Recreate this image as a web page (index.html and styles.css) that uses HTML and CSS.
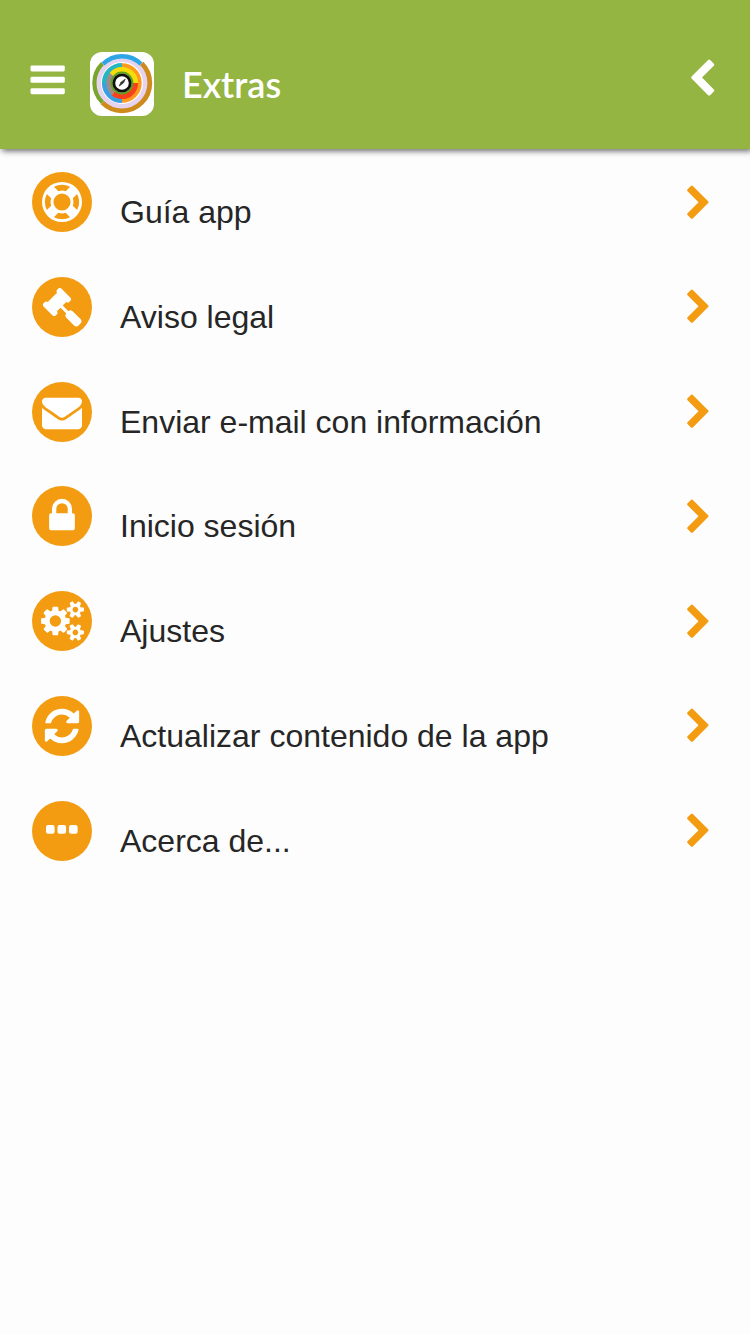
FILE: index.html
```html
<!DOCTYPE html>
<html lang="es">
<head>
    <meta charset="UTF-8">
    <meta name="viewport" content="width=device-width, initial-scale=1.0">
    <title>Extras</title>
    <link rel="stylesheet" href="styles.css">
</head>
<body>
    <header class="header">
        <button class="menu-btn" aria-label="Menú">
            <svg width="35" height="30" viewBox="0 0 35 30">
                <rect x="0.5" y="0.4" width="34.3" height="6" rx="1.4"/>
                <rect x="0.5" y="11.8" width="34.3" height="6" rx="1.4"/>
                <rect x="0.5" y="23.2" width="34.3" height="6" rx="1.4"/>
            </svg>
        </button>
        <svg class="logo" viewBox="0 0 64 64">
            <g class="rings" fill="none">
                <circle cx="32" cy="31" r="23.5" stroke="#e6d3ef" stroke-width="5"/>
                <circle cx="32" cy="31" r="27.8" pathLength="360" stroke="#cf8a1c" stroke-width="4.8" stroke-dasharray="180 180" stroke-dashoffset="45"/>
                <circle cx="32" cy="31" r="27.6" pathLength="360" stroke="#7aa52c" stroke-width="4.2" stroke-dasharray="90 270" stroke-dashoffset="-135"/>
                <circle cx="32" cy="31" r="26.8" pathLength="360" stroke="#2ea6e6" stroke-width="4.4" stroke-dasharray="90 270" stroke-dashoffset="-225"/>
                <circle cx="32" cy="31" r="17.6" pathLength="360" stroke="#3a9fe0" stroke-width="5" stroke-dasharray="90 270" stroke-dashoffset="-90"/>
                <circle cx="32" cy="31" r="17.6" pathLength="360" stroke="#27b5c0" stroke-width="5" stroke-dasharray="90 270" stroke-dashoffset="-180"/>
                <circle cx="32" cy="31" r="17.4" pathLength="360" stroke="#ff9a1c" stroke-width="4.6" stroke-dasharray="180 180" stroke-dashoffset="90"/>
                <circle cx="32" cy="31" r="13" pathLength="360" stroke="#a08a86" stroke-width="5" stroke-dasharray="90 270" stroke-dashoffset="-130"/>
                <circle cx="32" cy="31" r="13.3" pathLength="360" stroke="#f5dc0a" stroke-width="5.6" stroke-dasharray="140 220" stroke-dashoffset="140"/>
                <circle cx="32" cy="31" r="13.3" pathLength="360" stroke="#f8401c" stroke-width="5.6" stroke-dasharray="130 230"/>
                <circle cx="32" cy="31" r="10.4" stroke="#5fa51c" stroke-width="2"/>
                <circle cx="32" cy="31" r="8.2" fill="#fff" stroke="#111" stroke-width="2.8"/>
                <path d="M29.2 34l1.8-3.8 4.2-3-1.8 3.8z" fill="#333" stroke="#333" stroke-width="0.8"/>
            </g>
        </svg>
        <h1 class="title">Extras</h1>
        <button class="back-btn" aria-label="Volver">
            <svg width="40" height="40" viewBox="0 0 1792 1792"><path d="M1427 301l-531 531 531 531q19 19 19 45t-19 45l-166 166q-19 19-45 19t-45-19l-742-742q-19-19-19-45t19-45l742-742q19-19 45-19t45 19l166 166q19 19 19 45t-19 45z"/></svg>
        </button>
    </header>

    <svg class="defs">
        <symbol id="chevron" viewBox="0 0 1792 1792"><path d="M1363 877l-742 742q-19 19-45 19t-45-19l-166-166q-19-19-19-45t19-45l531-531-531-531q-19-19-19-45t19-45l166-166q19-19 45-19t45 19l742 742q19 19 19 45t-19 45z"/></symbol>
    </svg>

    <ul class="menu">
        <li class="menu-item">
            <span class="icon"><svg viewBox="0 0 1792 1792"><path d="M896 0q182 0 348 71t286 191 191 286 71 348-71 348-191 286-286 191-348 71-348-71-286-191-191-286-71-348 71-348 191-286 286-191 348-71zm0 128q-190 0-361 90l194 194q82-28 167-28t167 28l194-194q-171-90-361-90zm-678 1129l194-194q-28-82-28-167t28-167l-194-194q-90 171-90 361t90 361zm678 407q190 0 361-90l-194-194q-82 28-167 28t-167-28l-194 194q171 90 361 90zm0-384q159 0 271.5-112.5t112.5-271.5-112.5-271.5-271.5-112.5-271.5 112.5-112.5 271.5 112.5 271.5 271.5 112.5zm484-217l194 194q90-171 90-361t-90-361l-194 194q28 82 28 167t-28 167z"/></svg></span>
            <span class="label">Guía app</span>
            <svg class="chevron"><use href="#chevron"/></svg>
        </li>
        <li class="menu-item">
            <span class="icon"><svg viewBox="0 0 1792 1792"><path d="M1771 1536q0 53-37 90l-107 108q-39 37-91 37-53 0-90-37l-363-364q-38-36-38-90 0-53 43-96l-256-256-126 126q-14 14-34 14t-34-14q2 2 12.5 12t12.5 13 10 11.5 10 13.5 6 13.5 5.5 16.5 1.5 18q0 38-28 68-3 3-16.5 18t-19 20.5-18.5 16.5-22 15.5-22 9-26 4.5q-40 0-68-28l-408-408q-28-28-28-68 0-13 4.5-26t9-22 15.5-22 16.5-18.5 20.5-19 18-16.5q30-28 68-28 10 0 18 1.5t16.5 5.5 13.5 6 13.5 10 11.5 10 13 12.5 12 12.5q-14-14-14-34t14-34l348-348q14-14 34-14t34 14q-2-2-12.5-12t-12.5-13-10-11.5-10-13.5-6-13.5-5.5-16.5-1.5-18q0-38 28-68 3-3 16.5-18t19-20.5 18.5-16.5 22-15.5 22-9 26-4.5q40 0 68 28l408 408q28 28 28 68 0 13-4.5 26t-9 22-15.5 22-16.5 18.5-20.5 19-18 16.5q-30 28-68 28-10 0-18-1.5t-16.5-5.5-13.5-6-13.5-10-11.5-10-13-12.5-12-12.5q14 14 14 34t-14 34l-126 126 256 256q43-43 96-43 52 0 91 37l363 363q37 39 37 91z"/></svg></span>
            <span class="label">Aviso legal</span>
            <svg class="chevron"><use href="#chevron"/></svg>
        </li>
        <li class="menu-item">
            <span class="icon"><svg viewBox="0 0 1792 1792"><path d="M1792 710v794q0 66-47 113t-113 47h-1472q-66 0-113-47t-47-113v-794q44 49 101 87 362 246 497 345 57 42 92.5 65.5t94.5 48 110 24.5h2q51 0 110-24.5t94.5-48 92.5-65.5q170-123 498-345 57-39 100-87zm0-294q0 79-49 151t-122 123q-376 261-468 325-10 7-42.5 31t-54 38.5-52 32.5-57.5 27-50 9h-2q-23 0-50-9t-57.5-27-52-32.5-54-38.5-42.5-31q-91-64-262-182.5t-205-142.5q-62-42-117-115.5t-55-136.5q0-78 41.5-130t118.5-52h1472q65 0 112.5 47t47.5 113z"/></svg></span>
            <span class="label">Enviar e-mail con información</span>
            <svg class="chevron"><use href="#chevron"/></svg>
        </li>
        <li class="menu-item">
            <span class="icon"><svg viewBox="0 0 1792 1792"><path d="M640 768h512v-192q0-106-75-181t-181-75-181 75-75 181v192zm832 96v576q0 40-28 68t-68 28h-960q-40 0-68-28t-28-68v-576q0-40 28-68t68-28h32v-192q0-184 132-316t316-132 316 132 132 316v192h32q40 0 68 28t28 68z"/></svg></span>
            <span class="label">Inicio sesión</span>
            <svg class="chevron"><use href="#chevron"/></svg>
        </li>
        <li class="menu-item">
            <span class="icon"><svg class="wide" viewBox="0 0 1920 1792"><path d="M896 896q0-106-75-181t-181-75-181 75-75 181 75 181 181 75 181-75 75-181zm768 512q0-52-38-90t-90-38-90 38-38 90q0 53 37.5 90.5t90.5 37.5 90.5-37.5 37.5-90.5zm0-1024q0-52-38-90t-90-38-90 38-38 90q0 53 37.5 90.5t90.5 37.5 90.5-37.5 37.5-90.5zm-384 421v185q0 10-7 19.5t-16 10.5l-155 24q-11 35-32 76 34 48 90 115 7 11 7 20 0 12-7 19-23 30-82.5 89.5t-78.5 59.5q-11 0-21-7l-115-90q-37 19-77 31-11 108-23 155-7 24-30 24h-186q-11 0-20-7.5t-10-17.5l-23-153q-34-10-75-31l-118 89q-7 7-20 7-11 0-21-8-144-133-144-160 0-9 7-19 10-14 41-53t47-61q-23-44-35-82l-152-24q-10-1-17-9.5t-7-19.5v-185q0-10 7-19.5t16-10.5l155-24q11-35 32-76-34-48-90-115-7-11-7-20 0-12 7-20 22-30 82-89t79-59q11 0 21 7l115 90q34-18 77-32 11-108 23-154 7-24 30-24h186q11 0 20 7.5t10 17.5l23 153q34 10 75 31l118-89q8-7 20-7 11 0 21 8 144 133 144 160 0 8-7 19-12 16-42 54t-45 60q23 48 34 82l152 23q10 2 17 10.5t7 19.5zm640 533v140q0 16-149 31-12 27-30 52 51 113 51 138 0 4-4 7-122 71-124 71-8 0-46-47t-52-68q-20 2-30 2t-30-2q-14 21-52 68t-46 47q-2 0-124-71-4-3-4-7 0-25 51-138-18-25-30-52-149-15-149-31v-140q0-16 149-31 13-29 30-52-51-113-51-138 0-4 4-7 4-2 35-20t59-34 30-16q8 0 46 46.5t52 67.5q20-2 30-2t30 2q51-71 92-112l6-2q4 0 124 70 4 3 4 7 0 25-51 138 17 23 30 52 149 15 149 31zm0-1024v140q0 16-149 31-12 27-30 52 51 113 51 138 0 4-4 7-122 71-124 71-8 0-46-47t-52-68q-20 2-30 2t-30-2q-14 21-52 68t-46 47q-2 0-124-71-4-3-4-7 0-25 51-138-18-25-30-52-149-15-149-31v-140q0-16 149-31 13-29 30-52-51-113-51-138 0-4 4-7 4-2 35-20t59-34 30-16q8 0 46 46.5t52 67.5q20-2 30-2t30 2q51-71 92-112l6-2q4 0 124 70 4 3 4 7 0 25-51 138 17 23 30 52 149 15 149 31z"/></svg></span>
            <span class="label">Ajustes</span>
            <svg class="chevron"><use href="#chevron"/></svg>
        </li>
        <li class="menu-item">
            <span class="icon"><svg viewBox="0 0 1792 1792"><path d="M1639 1056q0 5-1 7-64 268-268 434.5t-478 166.5q-146 0-282.5-55t-243.5-157l-129 129q-19 19-45 19t-45-19-19-45v-448q0-26 19-45t45-19h448q26 0 45 19t19 45-19 45l-137 137q71 66 161 102t187 36q134 0 250-65t186-179q11-17 53-117 8-23 30-23h192q13 0 22.5 9.5t9.5 22.5zm25-800v448q0 26-19 45t-45 19h-448q-26 0-45-19t-19-45 19-45l138-138q-148-137-349-137-134 0-250 65t-186 179q-11 17-53 117-8 23-30 23h-199q-13 0-22.5-9.5t-9.5-22.5v-7q65-268 270-434.5t480-166.5q146 0 284 55.5t245 156.5l130-129q19-19 45-19t45 19 19 45z"/></svg></span>
            <span class="label">Actualizar contenido de la app</span>
            <svg class="chevron"><use href="#chevron"/></svg>
        </li>
        <li class="menu-item">
            <span class="icon"><svg viewBox="0 0 40 40">
                <rect x="4" y="14" width="8.6" height="8.8" rx="2.1"/>
                <rect x="15.5" y="14" width="8.6" height="8.8" rx="2.1"/>
                <rect x="27" y="14" width="8.6" height="8.8" rx="2.1"/>
            </svg></span>
            <span class="label">Acerca de...</span>
            <svg class="chevron"><use href="#chevron"/></svg>
        </li>
    </ul>
</body>
</html>
```

FILE: styles.css
```css
:root {
    --green: #94b541;
    --orange: #f39c12;
    --text: #262626;
}

* {
    margin: 0;
    padding: 0;
    box-sizing: border-box;
}

body {
    min-height: 1334px;
    background: #fdfdfd;
    color: var(--text);
    font-family: "Liberation Sans", Arial, sans-serif;
}

.header {
    display: flex;
    align-items: center;
    height: 149px;
    padding: 19px 30px 0;
    background: var(--green);
    box-shadow: 2px 2px 6px rgba(0, 0, 0, 0.6);
}

.menu-btn,
.back-btn {
    display: flex;
    border: none;
    background: none;
    cursor: pointer;
}

.menu-btn {
    margin-bottom: 8px;
}

.header button svg {
    fill: #fff;
}

.logo {
    width: 64px;
    height: 64px;
    margin-left: 25px;
    border-radius: 12px;
    background: #fff;
}

.rings {
    filter: blur(0.7px);
}

.title {
    margin-left: 28px;
    color: #fff;
    font-family: Lato, sans-serif;
    font-size: 36px;
    font-weight: 600;
}

.back-btn {
    margin: 0 -2px 10px auto;
}

.defs {
    display: none;
}

.menu {
    padding: 23px 32px 0;
    list-style: none;
}

.menu-item {
    display: flex;
    align-items: center;
    height: 60px;
    margin-bottom: 44.8px;
}

.icon {
    display: flex;
    align-items: center;
    justify-content: center;
    width: 60px;
    height: 60px;
    border-radius: 50%;
    background: var(--orange);
}

.icon svg {
    width: 40px;
    height: 40px;
    fill: #fff;
}

.icon .wide {
    width: 43px;
}

.label {
    margin-left: 28px;
    padding-top: 20px;
    font-size: 32px;
    line-height: 40px;
}

.chevron {
    width: 37px;
    height: 37px;
    margin: 2px 1px 0 auto;
    fill: var(--orange);
}
```
